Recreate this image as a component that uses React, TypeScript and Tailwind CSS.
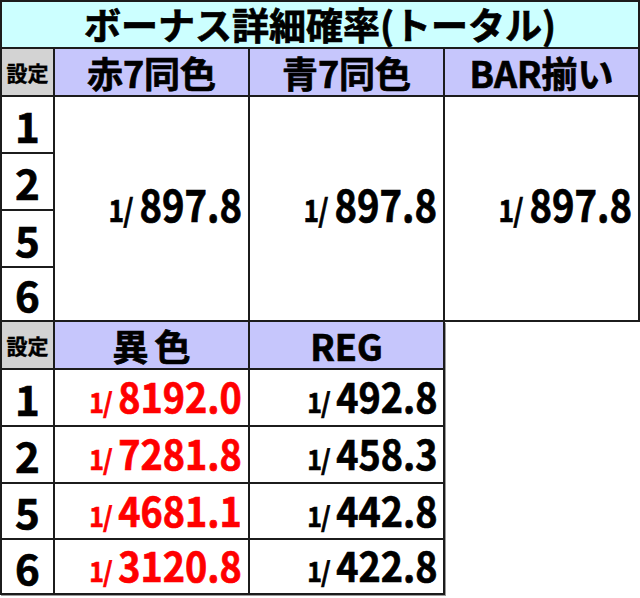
import React from "react";

const jp = "font-['Noto_Sans_CJK_JP',sans-serif] font-bold text-black";
const heavy = "[-webkit-text-stroke:0.7px]";

function Val({ v, red, big }: { v: string; red?: boolean; big?: boolean }) {
  return (
    <div className={"flex items-center justify-end bg-white pr-[6px] " + (big ? "pb-[12px]" : "pb-[4px]")}>
      <span
        className={
          "flex origin-right items-baseline leading-none " +
          heavy +
          " " +
          (big ? "scale-x-[0.85] " : "scale-x-[0.92] ") +
          (red ? "text-[#ff0000]" : "text-black")
        }
      >
        <span className={big ? "text-[31px] tracking-[-1px]" : "text-[27px] tracking-[-1px]"}>1/</span>
        <span className={big ? "ml-[8px] text-[45px]" : "ml-[7px] text-[41px]"}>{v}</span>
      </span>
    </div>
  );
}

function Head({ children, extra }: { children: React.ReactNode; extra?: string }) {
  return (
    <div className={"flex items-center justify-center bg-[#c6c6fc] text-[36px] leading-none " + heavy + " " + (extra || "")}>
      {children}
    </div>
  );
}

function SetHead() {
  return (
    <div className={"flex items-center justify-center bg-[#d3d3d3] text-[21px] leading-none [-webkit-text-stroke:0.4px]"}>
      設定
    </div>
  );
}

function SetNum({ n }: { n: string }) {
  return (
    <div className={"flex h-full items-center justify-center bg-white text-[42px] leading-none " + heavy}>
      {n}
    </div>
  );
}

export default function App() {
  const rows2 = [
    { s: "1", a: "8192.0", b: "492.8" },
    { s: "2", a: "7281.8", b: "458.3" },
    { s: "5", a: "4681.1", b: "442.8" },
    { s: "6", a: "3120.8", b: "422.8" },
  ];
  return (
    <div className={"w-[640px] h-[598px] bg-white " + jp}>
      <div className="grid grid-cols-[51px_193px_193px_193px] grid-rows-[45px_46px_55px_55px_55px_52px] gap-[2px] bg-[#1c1c1c] p-[2px]">
        <div className={"col-span-4 flex items-center justify-center bg-[#ccffff] text-[37px] leading-[45px] " + heavy}>
          ボーナス詳細確率(トータル)
        </div>
        <SetHead />
        <Head>赤7同色</Head>
        <Head>青7同色</Head>
        <Head>BAR揃い</Head>
        <div className="col-start-1 row-start-3 grid"><SetNum n="1" /></div>
        <div className="col-start-2 row-start-3 row-span-4 grid"><Val v="897.8" big /></div>
        <div className="col-start-3 row-start-3 row-span-4 grid"><Val v="897.8" big /></div>
        <div className="col-start-4 row-start-3 row-span-4 grid"><Val v="897.8" big /></div>
        <div className="col-start-1 row-start-4 grid"><SetNum n="2" /></div>
        <div className="col-start-1 row-start-5 grid"><SetNum n="5" /></div>
        <div className="col-start-1 row-start-6 grid"><SetNum n="6" /></div>
      </div>
      <div className="grid w-[445px] grid-cols-[51px_193px_193px] grid-rows-[46px_55px_55px_54px_53px] gap-[2px] bg-[#1c1c1c] px-[2px] pb-[2px] shadow-[1px_1px_0_#9a9a9a]">
        <SetHead />
        <Head extra="tracking-[6px] pl-[6px]">異色</Head>
        <Head>REG</Head>
        {rows2.map((r) => (
          <React.Fragment key={r.s}>
            <SetNum n={r.s} />
            <Val v={r.a} red />
            <Val v={r.b} />
          </React.Fragment>
        ))}
      </div>
    </div>
  );
}
